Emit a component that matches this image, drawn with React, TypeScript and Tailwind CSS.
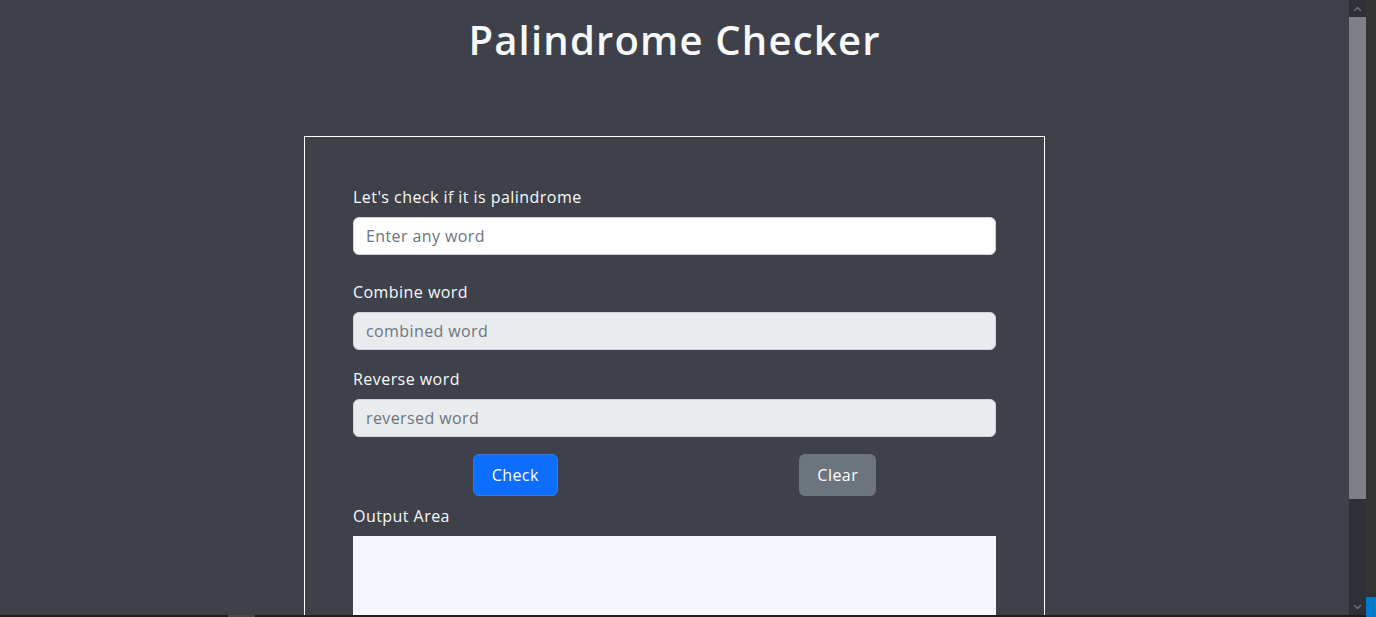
function Field({ label, placeholder, disabled }: { label: string; placeholder: string; disabled?: boolean }) {
  return (
    <div className="flex flex-col">
      <label className="text-[16px] leading-[24px] tracking-[0.45px] text-[#f8f9fa] mb-2">{label}</label>
      <input
        disabled={disabled}
        placeholder={placeholder}
        className={
          "h-[38px] w-full rounded-[6px] border border-[#ced4da] px-3 text-[16px] tracking-[0.4px] text-[#212529] placeholder:text-[#6c757d] outline-none " +
          (disabled ? "bg-[#e9ecef]" : "bg-white")
        }
      />
    </div>
  );
}

export default function App() {
  return (
    <div className="h-[617px] w-[1376px] overflow-hidden bg-[#1e1e1e] flex flex-col font-['Open_Sans',sans-serif]">
      <div className="flex h-[615px]">
        <main className="w-[1349px] bg-[#3e4149] overflow-hidden flex flex-col items-center">
          <h1 className="mt-[16px] text-[40px] leading-[48px] font-semibold tracking-[1.2px] text-[#f8f9fa]">Palindrome Checker</h1>
          <section className="mt-[72px] w-[741px] border border-white px-[48px] pt-[48px] pb-12">
            <Field label="Let's check if it is palindrome" placeholder="Enter any word" />
            <div className="mt-[25px]">
              <Field label="Combine word" placeholder="combined word" disabled />
            </div>
            <div className="mt-[17px]">
              <Field label="Reverse word" placeholder="reversed word" disabled />
            </div>
            <div className="mt-[17px] grid grid-cols-2">
              <div className="flex justify-center pl-[3px]">
                <button className="h-[42px] px-[18px] rounded-[6px] bg-[#0d6efd] border border-[#2d7df0] text-white text-[16px] tracking-[0.45px]">Check</button>
              </div>
              <div className="flex justify-center pl-[5px]">
                <button className="h-[42px] px-[18px] rounded-[6px] bg-[#6c757d] text-white text-[16px] tracking-[0.45px]">Clear</button>
              </div>
            </div>
            <p className="mt-2 text-[16px] leading-[24px] tracking-[0.45px] text-[#f8f9fa]">Output Area</p>
            <div className="mt-2 h-[160px] bg-[#f6f7fc]"></div>
          </section>
        </main>
        <div className="w-[17px] bg-[#2e3038] flex flex-col">
          <div className="h-[17px] flex items-center justify-center">
            <svg width="9" height="6" viewBox="0 0 9 6"><path d="M1 5 L4.5 1.5 L8 5" stroke="#6e7079" strokeWidth="1.5" fill="none" /></svg>
          </div>
          <div className="h-[482px] bg-[#7f8086]"></div>
          <div className="flex-1"></div>
          <div className="h-[17px] flex items-center justify-center">
            <svg width="9" height="6" viewBox="0 0 9 6"><path d="M1 1 L4.5 4.5 L8 1" stroke="#6e7079" strokeWidth="1.5" fill="none" /></svg>
          </div>
        </div>
        <div className="w-[10px] bg-[#333333] flex flex-col justify-end">
          <div className="h-[18px] bg-[#007acc]"></div>
        </div>
      </div>
      <div className="h-[2px] flex">
        <div className="w-[228px]"></div>
        <div className="w-[27px] bg-[#4a4a4a]"></div>
        <div className="flex-1"></div>
        <div className="w-[10px] bg-[#007acc]"></div>
      </div>
    </div>
  );
}
